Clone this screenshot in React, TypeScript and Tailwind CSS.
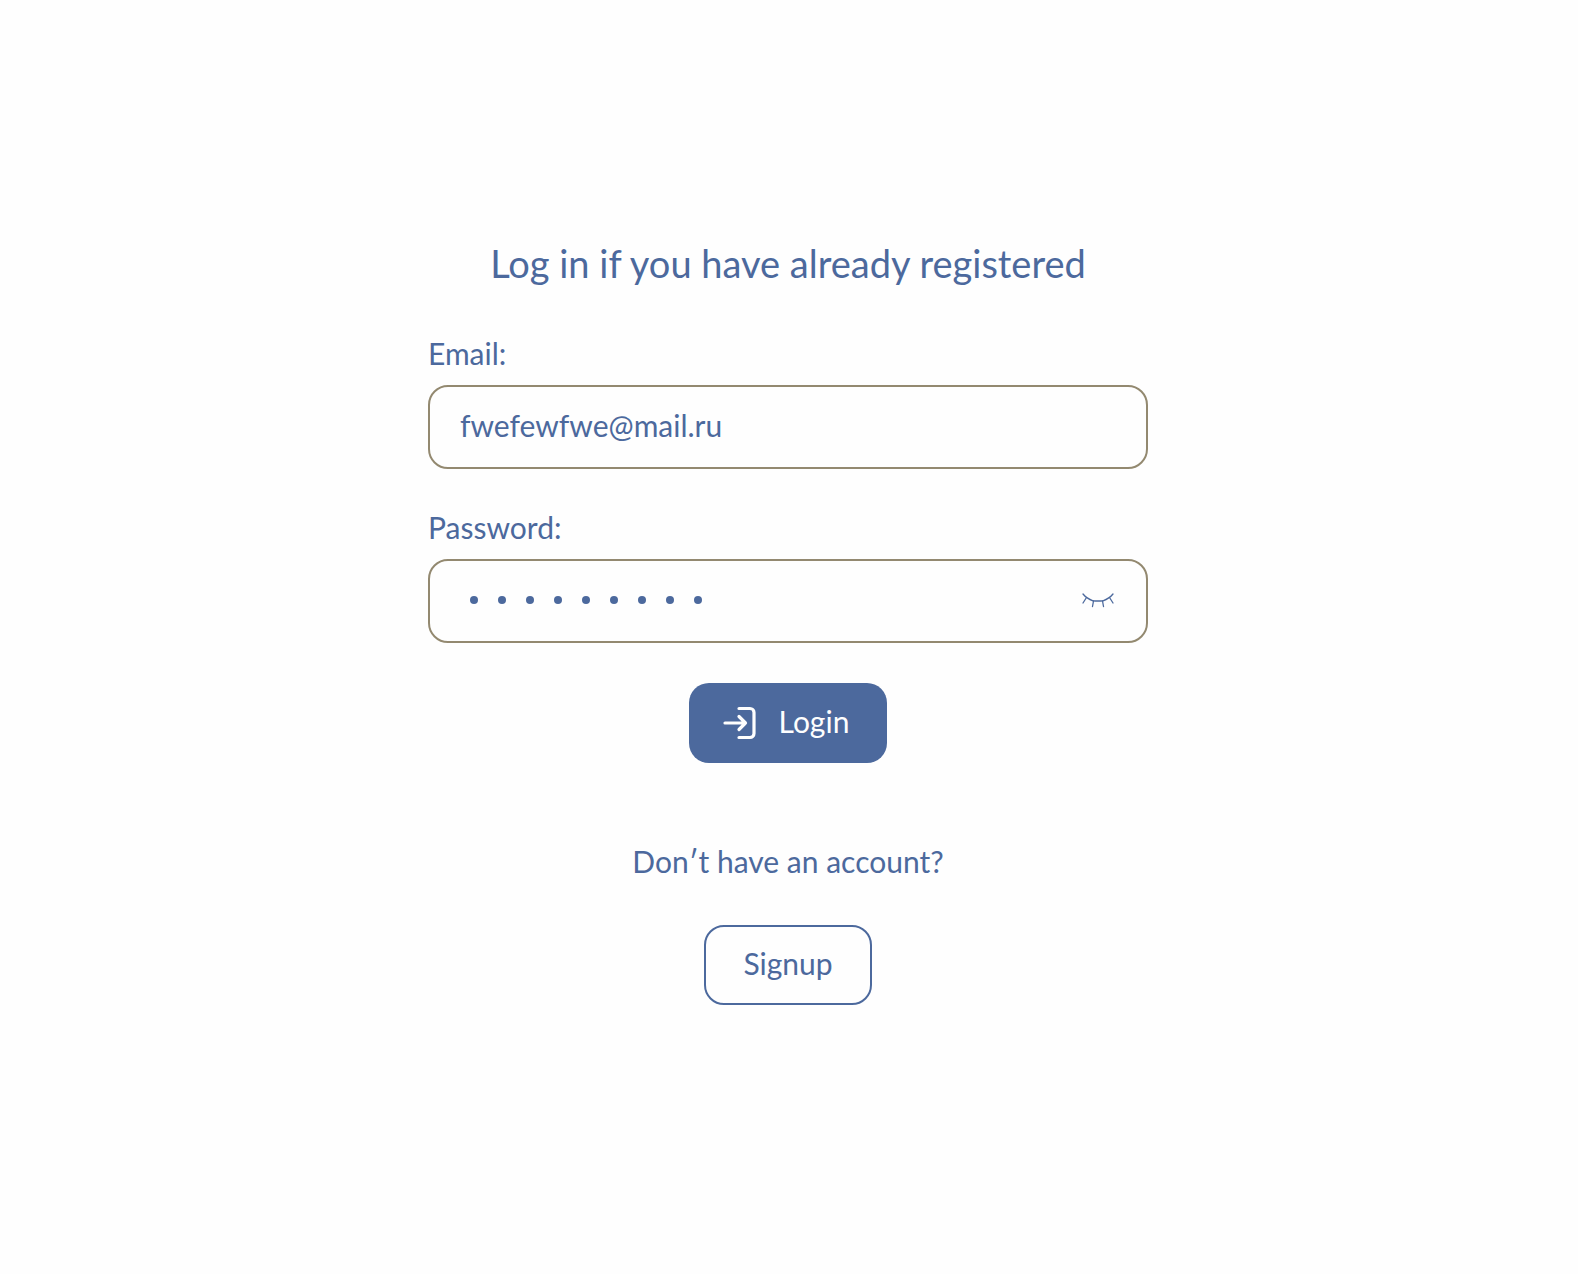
import { useState } from "react";

function ClosedEyeIcon() {
  return (
    <svg
      width="32"
      height="16"
      viewBox="0 0 32 16"
      fill="none"
      stroke="currentColor"
      strokeWidth="1.3"
      strokeLinecap="round"
      strokeLinejoin="round"
      aria-hidden="true"
    >
      <path d="M1 1C3 3.500 6 6 11 7.800Q16 8.200 21 7.800C26 6 29 3.500 31 1" />
      <path d="M4.500 4.500L1 10M11.500 8L10.500 13.500M20.500 8L21.500 13.500M27.500 4.500L31 10" />
    </svg>
  );
}

function LoginIcon() {
  return (
    <svg
      width="34"
      height="34"
      viewBox="0 0 34 34"
      fill="none"
      stroke="currentColor"
      strokeWidth="3.2"
      strokeLinecap="round"
      strokeLinejoin="round"
      aria-hidden="true"
    >
      <path d="M16 2.500H27A4 4 0 0 1 31 6.500V27.500A4 4 0 0 1 27 31.500H16" />
      <path d="M2 17H22.500M16 10.500L22.500 17L16 23.500" />
    </svg>
  );
}

export default function App() {
  const [email, setEmail] = useState("fwefewfwe@mail.ru");
  const [password, setPassword] = useState("qwerty123");
  const [visible, setVisible] = useState(false);

  return (
    <main className="flex min-h-screen flex-col items-center bg-[#fefefe] pt-[237px] pr-[26px] pb-16 pl-6 font-['Lato',sans-serif] text-[30px] leading-10 text-[#4c699d]">
      <h1 className="text-center text-[38px] leading-[52px]">Log in if you have already registered</h1>

      <form className="mt-11 flex w-full max-w-[720px] flex-col" onSubmit={(e) => e.preventDefault()}>
        <label htmlFor="email" className="mb-3">
          Email:
        </label>
        <input
          id="email"
          type="email"
          value={email}
          onChange={(e) => setEmail(e.target.value)}
          className="h-[84px] w-full rounded-[20px] border-2 border-[#938970] bg-transparent px-[30px] pb-1 outline-none"
        />

        <label htmlFor="password" className="mt-[38px] mb-3">
          Password:
        </label>
        <div className="relative flex h-[84px] items-center rounded-[20px] border-2 border-[#938970] pr-8 pl-[30px]">
          <input
            id="password"
            type={visible ? "text" : "password"}
            value={password}
            onChange={(e) => setPassword(e.target.value)}
            className={
              visible
                ? "h-full min-w-0 flex-1 bg-transparent pb-1 outline-none"
                : "h-full min-w-0 flex-1 bg-transparent text-transparent outline-none"
            }
          />
          {!visible && (
            <div
              aria-hidden="true"
              className="pointer-events-none absolute inset-y-0 right-20 left-10 flex items-center gap-5 overflow-hidden pb-0.5"
            >
              {Array.from(password, (_, i) => (
                <span key={i} className="size-2 shrink-0 rounded-full bg-[#4c699d]" />
              ))}
            </div>
          )}
          <button type="button" aria-label="Show password" onClick={() => setVisible(!visible)}>
            <ClosedEyeIcon />
          </button>
        </div>

        <button
          type="submit"
          className="mt-10 flex h-20 items-center gap-[22px] self-center rounded-[20px] bg-[#4c699d] pr-[38px] pl-[34px] text-[#fefefe]"
        >
          <LoginIcon />
          <span className="pb-1">Login</span>
        </button>
      </form>

      <p className="mt-[78px] text-center">Don′t have an account?</p>
      <button type="button" className="mt-11 h-20 rounded-[20px] border-2 border-[#4c699d] px-[37px] pb-1">
        Signup
      </button>
    </main>
  );
}
